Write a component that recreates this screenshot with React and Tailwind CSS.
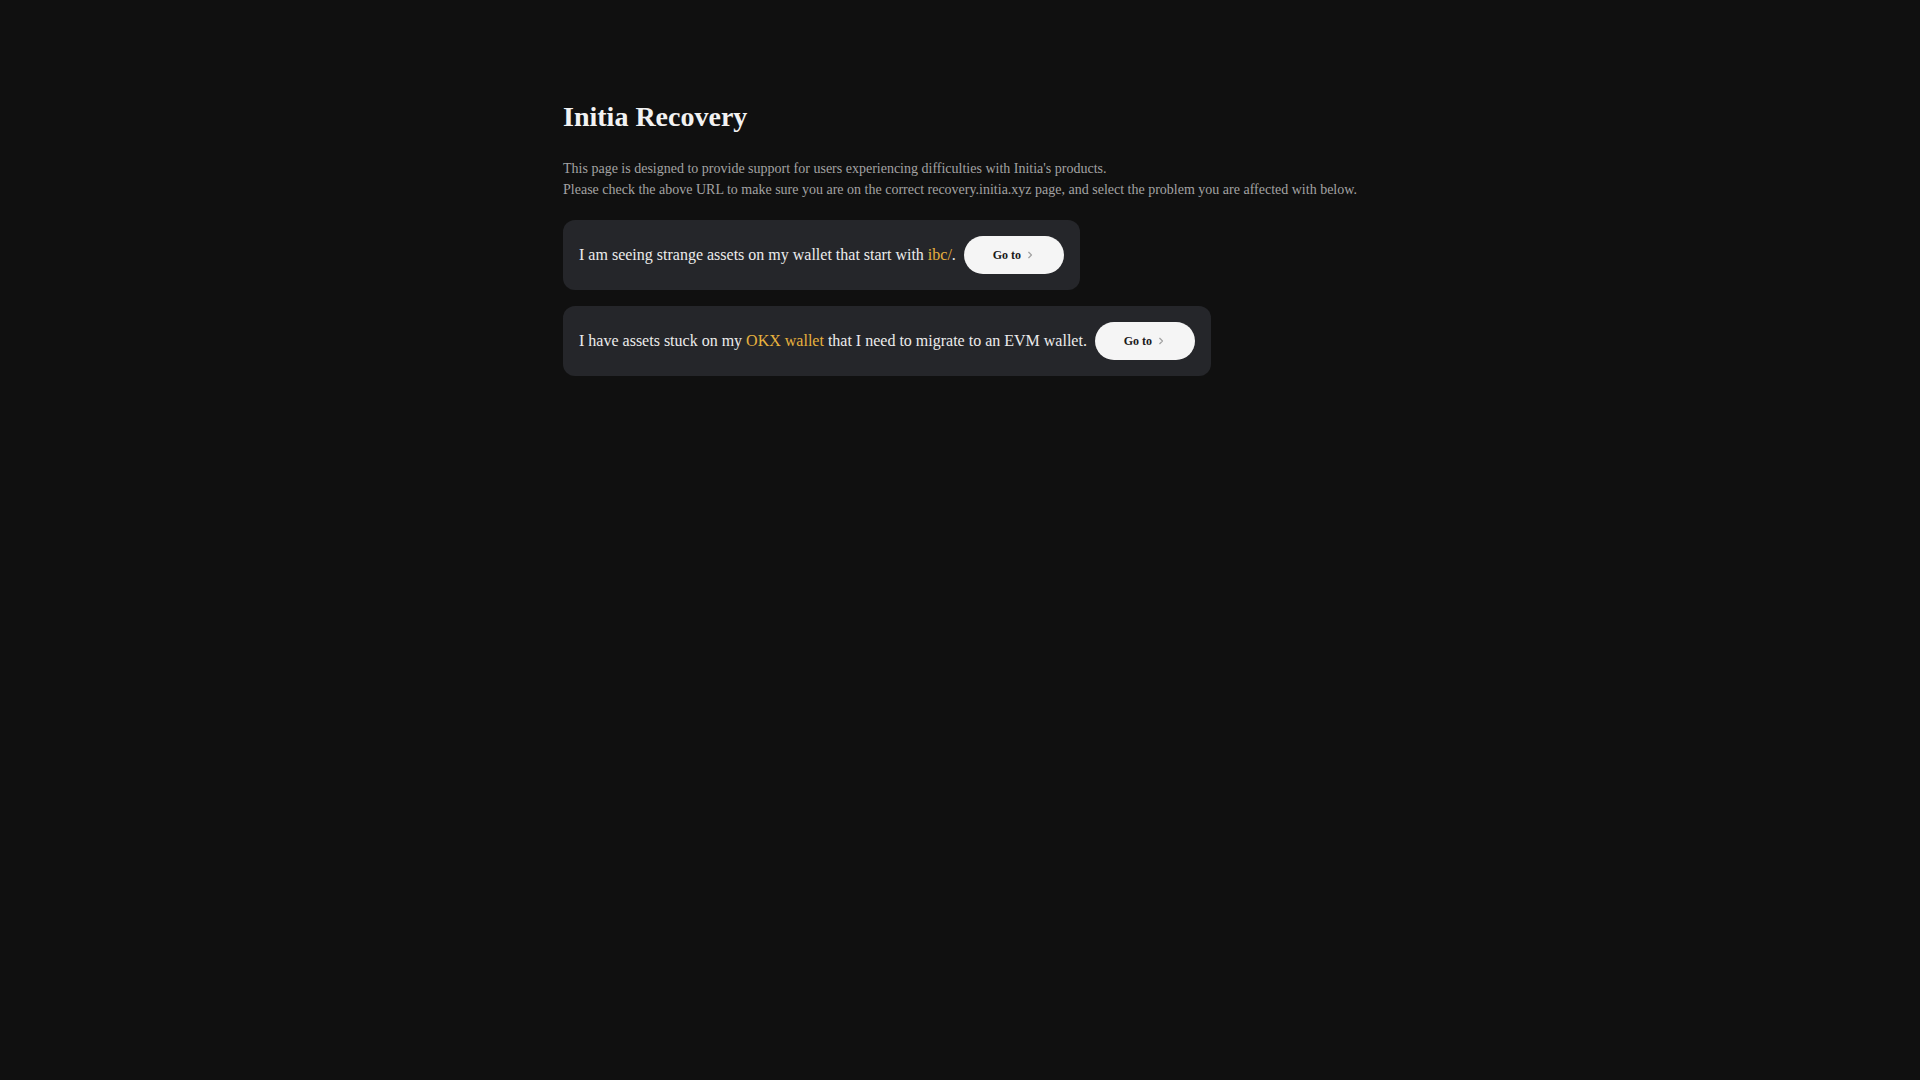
import React from "react";

function Chevron() {
  return (
    <svg width="10" height="10" viewBox="0 0 24 24" fill="none" stroke="#a3a3a3" strokeWidth="3" strokeLinecap="round" strokeLinejoin="round">
      <path d="M9 5.5l6.5 6.5-6.5 6.5" />
    </svg>
  );
}

function Card({ children }) {
  return (
    <div className="flex w-fit items-center gap-2 rounded-xl bg-[#25262a] p-4">
      <p className="text-[16px] leading-6 text-[#ececec]">{children}</p>
      <button className="flex h-[38px] w-[100px] items-center justify-center gap-1 rounded-full bg-[#f5f5f5] text-[12px] font-bold text-[#1a1a1a]">
        <span>Go to</span>
        <Chevron />
      </button>
    </div>
  );
}

export default function App() {
  return (
    <div className="min-h-screen bg-[#101010]" style={{ fontFamily: '"Liberation Serif", "Times New Roman", serif' }}>
      <div className="mx-auto w-fit pt-[100px]">
        <h1 className="text-[28px] font-bold leading-[1.2] text-[#f2f2f2]">Initia Recovery</h1>
        <div className="mt-[24px] text-[14px] leading-[21px] text-[#a3a3a3]">
          <p>This page is designed to provide support for users experiencing difficulties with Initia's products.</p>
          <p>Please check the above URL to make sure you are on the correct recovery.initia.xyz page, and select the problem you are affected with below.</p>
        </div>
        <div className="mt-5 flex flex-col gap-4">
          <Card>
            I am seeing strange assets on my wallet that start with <span className="text-[#e8b23e]">ibc/</span>.
          </Card>
          <Card>
            I have assets stuck on my <span className="text-[#e8b23e]">OKX wallet</span> that I need to migrate to an EVM wallet.
          </Card>
        </div>
      </div>
    </div>
  );
}
